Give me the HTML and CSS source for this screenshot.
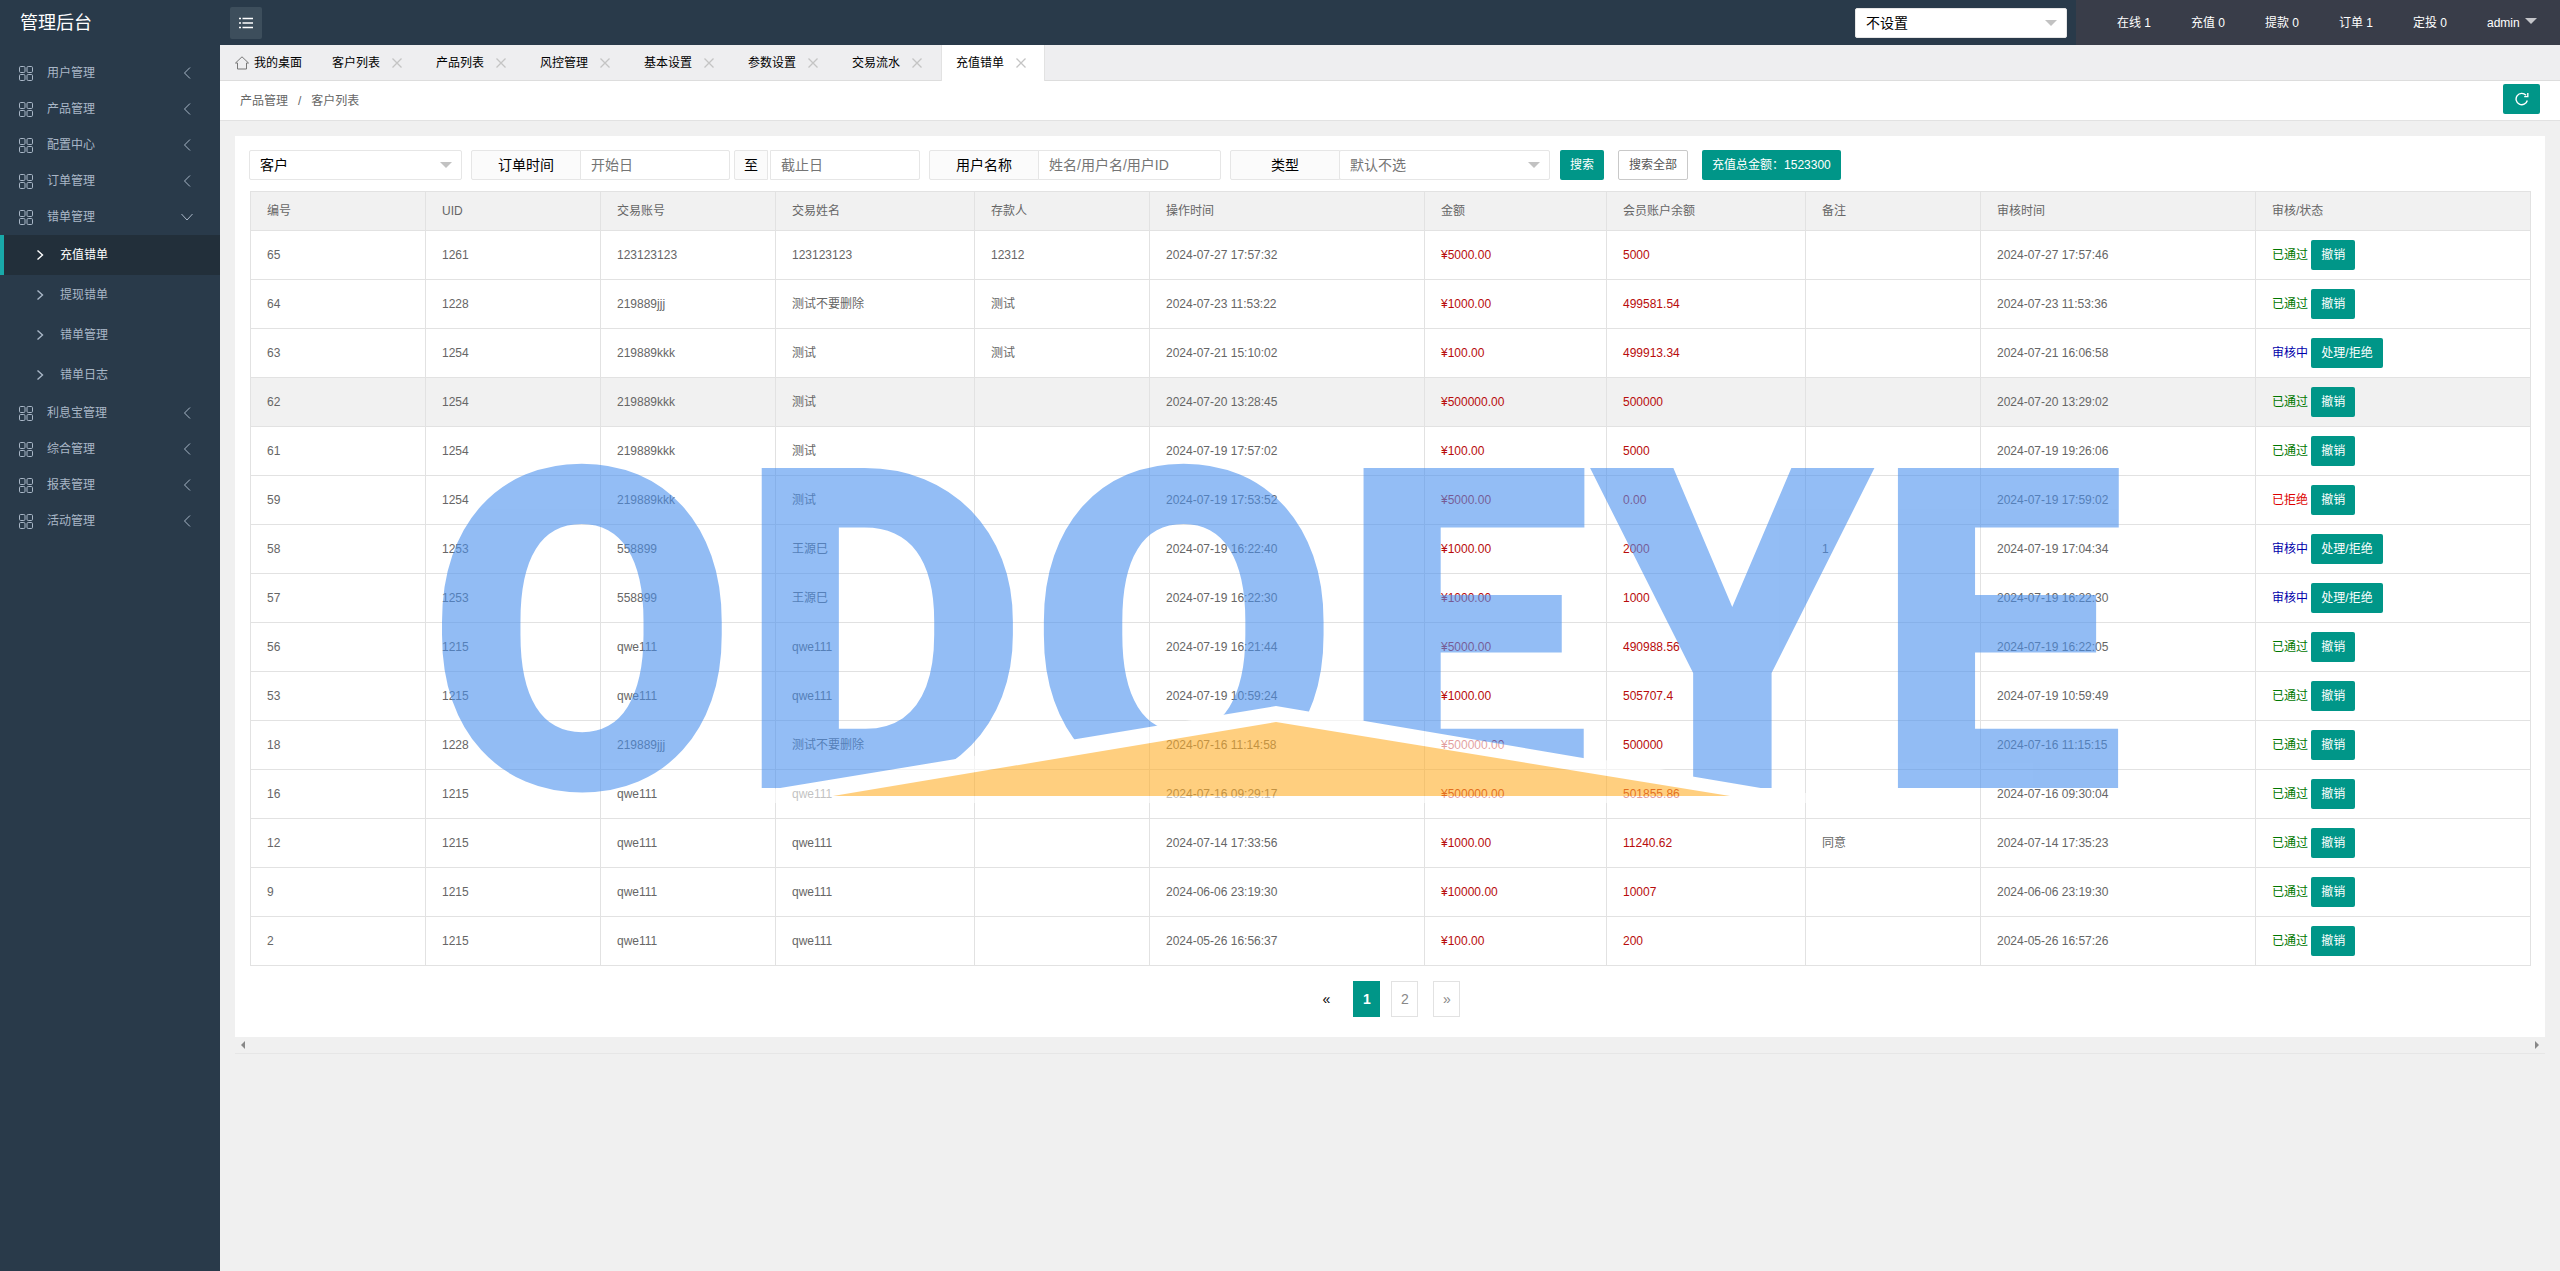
FILE: index.html
```html
<!DOCTYPE html>
<html lang="zh-CN">
<head>
<meta charset="utf-8">
<title>管理后台</title>
<link rel="stylesheet" href="styles.css">
</head>
<body>
<svg class="sprite" aria-hidden="true">
  <symbol id="grid" viewBox="0 0 14 15"><g fill="none" stroke="currentColor"><rect x=".5" y=".5" width="5.5" height="6" rx="1.2"/><rect x="8" y=".5" width="5.5" height="6" rx="1.2"/><rect x=".5" y="8.5" width="5.5" height="6" rx="1.2"/><rect x="8" y="8.5" width="5.5" height="6" rx="1.2"/></g></symbol>
  <symbol id="left" viewBox="0 0 12 12"><path d="M9 .5 3.5 6 9 11.500" fill="none" stroke="currentColor"/></symbol>
  <symbol id="down" viewBox="0 0 12 12"><path d="M.5 3 6 9l5.500-6" fill="none" stroke="currentColor"/></symbol>
  <symbol id="right" viewBox="0 0 12 12"><path d="M3.500 1.500 8.500 6l-5 4.500" fill="none" stroke="currentColor" stroke-width="1.400"/></symbol>
  <symbol id="close" viewBox="0 0 10 10"><path d="M.5.5l9 9M9.500.5l-9 9" fill="none" stroke="currentColor" stroke-width="1.300"/></symbol>
  <symbol id="caret" viewBox="0 0 12 6"><path d="M0 0h12L6 6z" fill="currentColor"/></symbol>
</svg>

<header class="header">
  <a class="logo" href="#">管理后台</a>
  <button class="fold" type="button" aria-label="折叠菜单"><svg width="14" height="12" viewBox="0 0 14 12" fill="none" stroke="currentColor" stroke-width="1.500"><path d="M3.500 1.500H14M3.500 6H14M3.500 10.500H14M0 1.500h2M0 6h2M0 10.500h2"/></svg></button>
  <div class="select header-select">
    <select aria-label="设置"><option>不设置</option></select>
    <svg class="caret"><use href="#caret"/></svg>
  </div>
  <nav class="topnav">
    <a href="#">在线 1</a><a href="#">充值 0</a><a href="#">提款 0</a><a href="#">订单 1</a><a href="#">定投 0</a><a class="account" href="#">admin <svg class="caret-light"><use href="#caret"/></svg></a>
  </nav>
</header>

<div class="layout">
  <nav class="side">
    <a class="item" href="#"><svg class="grid"><use href="#grid"/></svg>用户管理<svg class="arrow"><use href="#left"/></svg></a>
    <a class="item" href="#"><svg class="grid"><use href="#grid"/></svg>产品管理<svg class="arrow"><use href="#left"/></svg></a>
    <a class="item" href="#"><svg class="grid"><use href="#grid"/></svg>配置中心<svg class="arrow"><use href="#left"/></svg></a>
    <a class="item" href="#"><svg class="grid"><use href="#grid"/></svg>订单管理<svg class="arrow"><use href="#left"/></svg></a>
    <a class="item" href="#"><svg class="grid"><use href="#grid"/></svg>错单管理<svg class="arrow"><use href="#down"/></svg></a>
    <a class="sub active" href="#"><svg><use href="#right"/></svg>充值错单</a>
    <a class="sub" href="#"><svg><use href="#right"/></svg>提现错单</a>
    <a class="sub" href="#"><svg><use href="#right"/></svg>错单管理</a>
    <a class="sub" href="#"><svg><use href="#right"/></svg>错单日志</a>
    <a class="item" href="#"><svg class="grid"><use href="#grid"/></svg>利息宝管理<svg class="arrow"><use href="#left"/></svg></a>
    <a class="item" href="#"><svg class="grid"><use href="#grid"/></svg>综合管理<svg class="arrow"><use href="#left"/></svg></a>
    <a class="item" href="#"><svg class="grid"><use href="#grid"/></svg>报表管理<svg class="arrow"><use href="#left"/></svg></a>
    <a class="item" href="#"><svg class="grid"><use href="#grid"/></svg>活动管理<svg class="arrow"><use href="#left"/></svg></a>
  </nav>

  <div class="content">
    <div class="tabs">
      <a class="tab home" href="#"><svg width="14" height="14" viewBox="0 0 14 14" fill="none" stroke="#777"><path d="M.5 7 7 .8 13.500 7H11.500v6H2.500V7z"/></svg>我的桌面</a>
      <a class="tab" href="#">客户列表<svg class="close"><use href="#close"/></svg></a>
      <a class="tab" href="#">产品列表<svg class="close"><use href="#close"/></svg></a>
      <a class="tab" href="#">风控管理<svg class="close"><use href="#close"/></svg></a>
      <a class="tab" href="#">基本设置<svg class="close"><use href="#close"/></svg></a>
      <a class="tab" href="#">参数设置<svg class="close"><use href="#close"/></svg></a>
      <a class="tab" href="#">交易流水<svg class="close"><use href="#close"/></svg></a>
      <a class="tab current" href="#">充值错单<svg class="close"><use href="#close"/></svg></a>
    </div>

    <div class="crumbs">
      <a href="#">产品管理</a><span>/</span><a href="#">客户列表</a>
      <button class="refresh" type="button" aria-label="刷新"><svg width="14" height="14" viewBox="0 0 14 14" fill="none" stroke="currentColor" stroke-width="1.400"><path d="M12.300 8.500A5.700 5.700 0 1 1 11 3.200M12.800 1v3.600H9.200"/></svg></button>
    </div>

    <main class="card">
      <form class="filters">
        <div class="select first">
          <select aria-label="客户"><option>客户</option></select>
          <svg class="caret"><use href="#caret"/></svg>
        </div>
        <div class="group time">
          <label for="start">订单时间</label>
          <input id="start" type="text" placeholder="开始日">
          <label class="to" for="end">至</label>
          <input class="end" id="end" type="text" placeholder="截止日">
        </div>
        <div class="group user">
          <label for="user">用户名称</label>
          <input id="user" type="text" placeholder="姓名/用户名/用户ID">
        </div>
        <div class="group">
          <label for="kind">类型</label>
          <div class="select kind">
            <select id="kind"><option>默认不选</option></select>
            <svg class="caret"><use href="#caret"/></svg>
          </div>
        </div>
        <div class="actions">
          <button class="btn" type="button">搜索</button>
          <button class="btn plain" type="button">搜索全部</button>
          <button class="btn" type="button">充值总金额：1523300</button>
        </div>
      </form>

      <table>
        <colgroup><col class="w-s"><col class="w-s"><col class="w-s"><col class="w-m"><col class="w-s"><col class="w-l"><col class="w-a"><col class="w-m"><col class="w-s"><col class="w-l"><col class="w-l"></colgroup>
        <thead><tr><th>编号</th><th>UID</th><th>交易账号</th><th>交易姓名</th><th>存款人</th><th>操作时间</th><th>金额</th><th>会员账户余额</th><th>备注</th><th>审核时间</th><th>审核/状态</th></tr></thead>
        <tbody>
        <tr><td>65</td><td>1261</td><td>123123123</td><td>123123123</td><td>12312</td><td>2024-07-27 17:57:32</td><td class="money">¥5000.00</td><td class="money">5000</td><td></td><td>2024-07-27 17:57:46</td><td><span class="pass">已通过</span> <button class="btn" type="button">撤销</button></td></tr>
        <tr><td>64</td><td>1228</td><td>219889jjj</td><td>测试不要删除</td><td>测试</td><td>2024-07-23 11:53:22</td><td class="money">¥1000.00</td><td class="money">499581.54</td><td></td><td>2024-07-23 11:53:36</td><td><span class="pass">已通过</span> <button class="btn" type="button">撤销</button></td></tr>
        <tr><td>63</td><td>1254</td><td>219889kkk</td><td>测试</td><td>测试</td><td>2024-07-21 15:10:02</td><td class="money">¥100.00</td><td class="money">499913.34</td><td></td><td>2024-07-21 16:06:58</td><td><span class="wait">审核中</span> <button class="btn" type="button">处理/拒绝</button></td></tr>
        <tr class="hover"><td>62</td><td>1254</td><td>219889kkk</td><td>测试</td><td></td><td>2024-07-20 13:28:45</td><td class="money">¥500000.00</td><td class="money">500000</td><td></td><td>2024-07-20 13:29:02</td><td><span class="pass">已通过</span> <button class="btn" type="button">撤销</button></td></tr>
        <tr><td>61</td><td>1254</td><td>219889kkk</td><td>测试</td><td></td><td>2024-07-19 17:57:02</td><td class="money">¥100.00</td><td class="money">5000</td><td></td><td>2024-07-19 19:26:06</td><td><span class="pass">已通过</span> <button class="btn" type="button">撤销</button></td></tr>
        <tr><td>59</td><td>1254</td><td>219889kkk</td><td>测试</td><td></td><td>2024-07-19 17:53:52</td><td class="money">¥5000.00</td><td class="money">0.00</td><td></td><td>2024-07-19 17:59:02</td><td><span class="deny">已拒绝</span> <button class="btn" type="button">撤销</button></td></tr>
        <tr><td>58</td><td>1253</td><td>558899</td><td>王源巳</td><td></td><td>2024-07-19 16:22:40</td><td class="money">¥1000.00</td><td class="money">2000</td><td>1</td><td>2024-07-19 17:04:34</td><td><span class="wait">审核中</span> <button class="btn" type="button">处理/拒绝</button></td></tr>
        <tr><td>57</td><td>1253</td><td>558899</td><td>王源巳</td><td></td><td>2024-07-19 16:22:30</td><td class="money">¥1000.00</td><td class="money">1000</td><td></td><td>2024-07-19 16:22:30</td><td><span class="wait">审核中</span> <button class="btn" type="button">处理/拒绝</button></td></tr>
        <tr><td>56</td><td>1215</td><td>qwe111</td><td>qwe111</td><td></td><td>2024-07-19 16:21:44</td><td class="money">¥5000.00</td><td class="money">490988.56</td><td></td><td>2024-07-19 16:22:05</td><td><span class="pass">已通过</span> <button class="btn" type="button">撤销</button></td></tr>
        <tr><td>53</td><td>1215</td><td>qwe111</td><td>qwe111</td><td></td><td>2024-07-19 10:59:24</td><td class="money">¥1000.00</td><td class="money">505707.4</td><td></td><td>2024-07-19 10:59:49</td><td><span class="pass">已通过</span> <button class="btn" type="button">撤销</button></td></tr>
        <tr><td>18</td><td>1228</td><td>219889jjj</td><td>测试不要删除</td><td></td><td>2024-07-16 11:14:58</td><td class="money">¥500000.00</td><td class="money">500000</td><td></td><td>2024-07-16 11:15:15</td><td><span class="pass">已通过</span> <button class="btn" type="button">撤销</button></td></tr>
        <tr><td>16</td><td>1215</td><td>qwe111</td><td>qwe111</td><td></td><td>2024-07-16 09:29:17</td><td class="money">¥500000.00</td><td class="money">501855.86</td><td></td><td>2024-07-16 09:30:04</td><td><span class="pass">已通过</span> <button class="btn" type="button">撤销</button></td></tr>
        <tr><td>12</td><td>1215</td><td>qwe111</td><td>qwe111</td><td></td><td>2024-07-14 17:33:56</td><td class="money">¥1000.00</td><td class="money">11240.62</td><td>同意</td><td>2024-07-14 17:35:23</td><td><span class="pass">已通过</span> <button class="btn" type="button">撤销</button></td></tr>
        <tr><td>9</td><td>1215</td><td>qwe111</td><td>qwe111</td><td></td><td>2024-06-06 23:19:30</td><td class="money">¥10000.00</td><td class="money">10007</td><td></td><td>2024-06-06 23:19:30</td><td><span class="pass">已通过</span> <button class="btn" type="button">撤销</button></td></tr>
        <tr><td>2</td><td>1215</td><td>qwe111</td><td>qwe111</td><td></td><td>2024-05-26 16:56:37</td><td class="money">¥100.00</td><td class="money">200</td><td></td><td>2024-05-26 16:57:26</td><td><span class="pass">已通过</span> <button class="btn" type="button">撤销</button></td></tr>
        </tbody>
      </table>

      <nav class="pages"><span class="prev">«</span><a class="on" href="#">1</a><a href="#">2</a><a class="next" href="#">»</a></nav>

      <svg class="watermark" viewBox="430 450 1700 360">
        <clipPath id="roof"><path d="M430 440H2130V810H1890L1276 706 690 803V810H430z"/></clipPath>
        <path d="M690 803 1276 706 1866 803zM833 796H1730L1276 722z" fill="#fff" fill-rule="evenodd" opacity=".6"/>
        <g clip-path="url(#roof)" opacity=".6"><text class="brand" y="788" x="1276" text-anchor="middle">ODOEYE</text></g>
        <path d="M833 796 1276 722 1730 796z" fill="#ffaf2a" opacity=".6"/>
      </svg>
    </main>

    <div class="scroll"><svg width="4" height="8" viewBox="0 0 4 8"><path d="M4 0v8L0 4z"/></svg><svg width="4" height="8" viewBox="0 0 4 8"><path d="M0 0v8l4-4z"/></svg></div>
  </div>
</div>
</body>
</html>
```
FILE: styles.css
```css
* { box-sizing: border-box; }
body {
  margin: 0;
  min-height: 100vh;
  display: flex;
  flex-direction: column;
  background: #f0f0f0;
  color: #666;
  font: 12px/24px "Liberation Sans", "Noto Sans CJK SC", sans-serif;
}
a { color: inherit; text-decoration: none; }
button, input, select { font: inherit; margin: 0; }
.sprite { display: none; }

/* header */
.header {
  display: flex;
  align-items: center;
  height: 45px;
  background: #293a4a;
  color: #fff;
}
.logo { width: 230px; padding-left: 20px; font-size: 18px; }
.fold {
  display: flex;
  align-items: center;
  justify-content: center;
  width: 32px;
  height: 32px;
  padding: 0;
  border: 0;
  border-radius: 2px;
  background: #3d4e5c;
  color: #fff;
}
.select { position: relative; width: 212px; height: 30px; }
.select select {
  width: 100%;
  height: 30px;
  padding: 0 10px;
  border: 1px solid #e6e6e6;
  border-radius: 2px;
  background: #fff;
  color: #000;
  font-size: 14px;
  appearance: none;
}
.caret {
  position: absolute;
  right: 10px;
  top: 12px;
  width: 12px;
  height: 6px;
  color: #c2c2c2;
  pointer-events: none;
}
.header-select { margin: 0 9px 0 auto; }
.topnav {
  display: flex;
  align-items: center;
  height: 45px;
  padding: 0 3px 0 21px;
  background: #393d49;
}
.topnav a { padding: 0 20px; white-space: nowrap; }
.caret-light { width: 12px; height: 6px; margin-left: 2px; vertical-align: 3px; color: #c4c5c9; }

/* side menu */
.layout { display: flex; flex: 1; }
.side {
  flex: none;
  width: 220px;
  padding-top: 10px;
  background: #293a4a;
  color: #a9b7c7;
}
.item { display: flex; align-items: center; height: 36px; padding: 0 27px 0 19px; }
.grid { width: 14px; height: 15px; margin-right: 14px; }
.arrow { width: 12px; height: 12px; margin-left: auto; }
.sub { display: flex; align-items: center; height: 40px; padding-left: 30px; border-left: 4px solid transparent; }
.sub svg { width: 12px; height: 12px; margin-right: 14px; }
.sub.active { border-color: #19a9a9; background: #222f3a; color: #fff; }

/* tabs and breadcrumb */
.content { flex: 1; min-width: 0; }
.tabs { display: flex; height: 36px; border-bottom: 1px solid #ddd; background: #eeeef0; color: #000; }
.tab { display: flex; align-items: center; gap: 12px; width: 104px; padding-left: 15px; }
.tab.home { gap: 5px; width: 97px; }
.tab.current { height: 36px; border: solid #e2e2e2; border-width: 0 1px; padding-left: 14px; background: #fff; }
.close { width: 10px; height: 10px; color: #c4c4c4; }
.crumbs {
  display: flex;
  align-items: center;
  height: 40px;
  padding: 0 20px;
  border-bottom: 1px solid #e2e2e2;
  background: #fff;
}
.crumbs span { margin: 0 10px; }
.refresh {
  display: flex;
  align-items: center;
  justify-content: center;
  width: 37px;
  height: 30px;
  margin: 0 0 3px auto;
  border: 0;
  border-radius: 2px;
  background: #009688;
  color: #fff;
}

/* card */
.card { position: relative; margin: 15px 15px 0; padding: 14px 15px 20px; background: #fff; }
.filters { display: flex; align-items: center; gap: 9px; margin-bottom: 11px; }
.first { width: 213px; margin-left: -1px; }
.group { display: flex; }
.group label {
  width: 110px;
  height: 30px;
  border: 1px solid #e6e6e6;
  border-radius: 2px 0 0 2px;
  background: #fbfbfb;
  color: #000;
  font-size: 14px;
  line-height: 28px;
  text-align: center;
}
.group input {
  width: 150px;
  height: 30px;
  margin-left: -1px;
  padding: 0 10px;
  border: 1px solid #e6e6e6;
  border-radius: 0 2px 2px 0;
  color: #757575;
  font-size: 14px;
}
.group input::placeholder { color: #757575; }
.group label.to { width: 34px; margin: 0 3px 0 4px; }
.user input { width: 183px; }
.kind { width: 211px; margin-left: -1px; }
.kind select { color: #757575; }
.actions { display: flex; gap: 14px; margin-left: 1px; }
.btn {
  height: 30px;
  padding: 0 10px;
  border: 0;
  border-radius: 2px;
  background: #009688;
  color: #fff;
  line-height: 30px;
  white-space: nowrap;
}
.btn.plain { border: 1px solid #c9c9c9; background: #fff; color: #555; line-height: 28px; }

table { width: 100%; table-layout: fixed; border-collapse: collapse; }
.w-s { width: 175px; }
.w-m { width: 199px; }
.w-a { width: 182px; }
.w-l { width: 275px; }
th, td { height: 49px; padding: 0 16px; border: 1px solid #e2e2e2; text-align: left; font-weight: 400; }
th { height: 39px; background: #f1f1f1; }
.hover { background: #f1f1f1; }
.money { color: #b80c0c; }
.pass { color: #070; }
.wait { color: #00a; }
.deny { color: #d00; }

.pages { display: flex; justify-content: center; align-items: center; margin-top: 15px; padding-left: 3px; font-size: 14px; }
.pages a { width: 27px; height: 36px; margin-right: 11px; border: 1px solid #e2e2e2; line-height: 34px; text-align: center; color: #888; }
.pages a.on { border-color: #009688; background: #009688; color: #fff; font-weight: 700; }
.pages a.next { margin: 0 0 0 4px; }
.prev { margin-right: 23px; color: #000; }

.watermark {
  position: absolute;
  left: 195px;
  top: 314px;
  width: 1700px;
  height: 360px;
  overflow: visible;
  pointer-events: none;
}
.brand { fill: #4b91ee; font: 900 450px Roboto, sans-serif; }

.scroll {
  display: flex;
  justify-content: space-between;
  align-items: center;
  height: 17px;
  margin: 0 15px;
  padding: 0 6px;
  border-bottom: 1px solid #e6e6e6;
  fill: #888;
}
```
